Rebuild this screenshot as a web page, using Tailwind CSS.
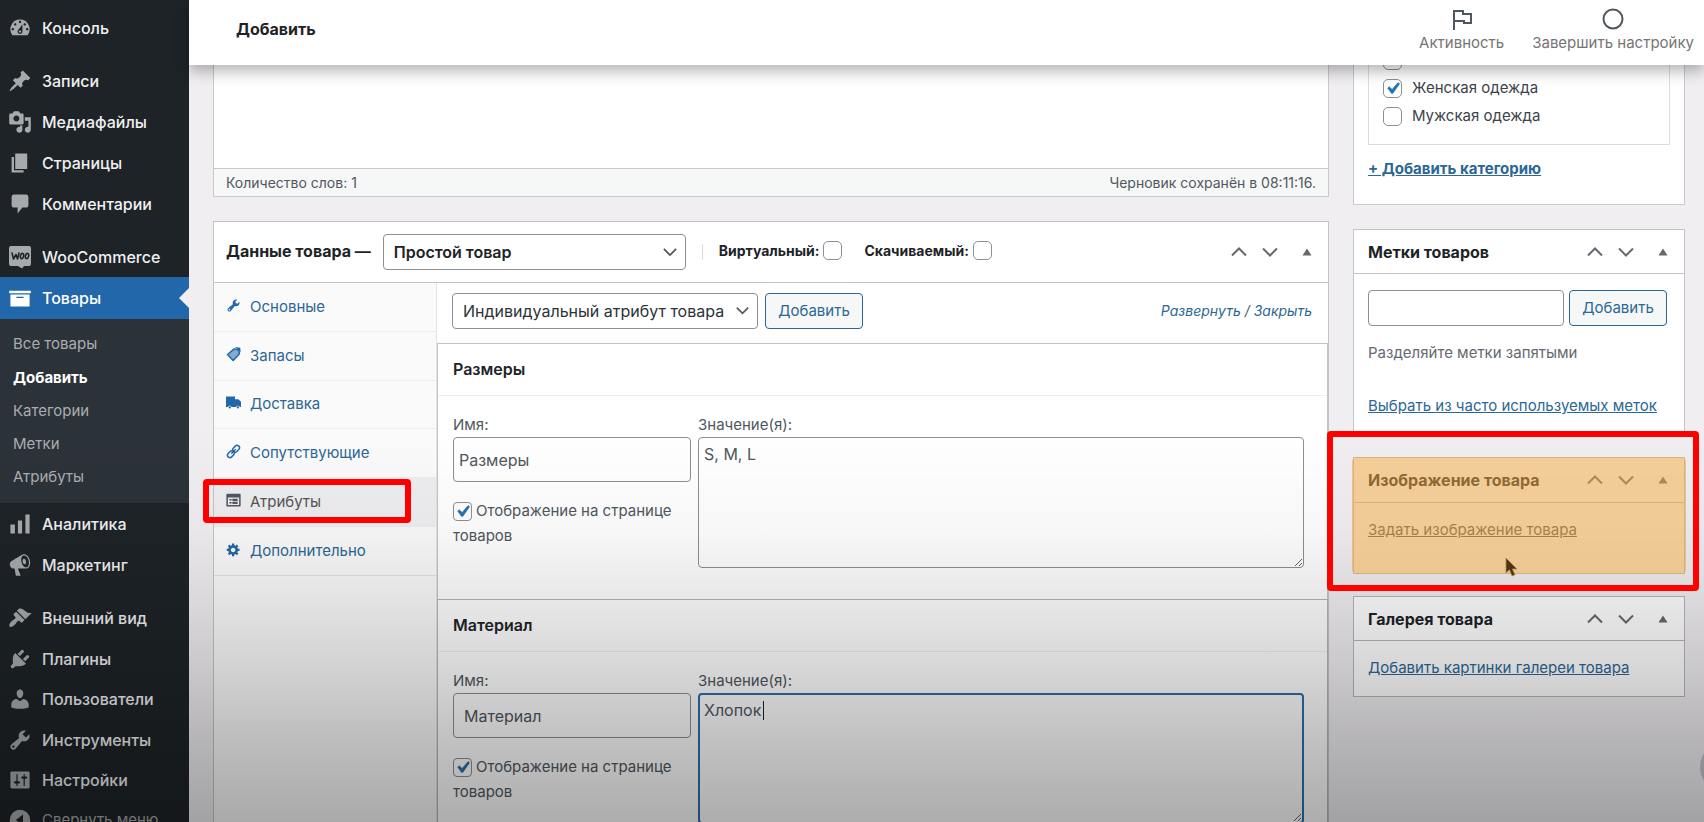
<!DOCTYPE html>
<html lang="ru">
<head>
<meta charset="utf-8">
<meta name="viewport" content="width=device-width, initial-scale=1">
<title>Добавить товар</title>
<script src="https://cdn.jsdelivr.net/npm/@tailwindcss/browser@4"></script>
</head>
<body class="bg-[#f0eef1] font-['Inter','Liberation_Sans',sans-serif] text-[15px] text-[#3c434a]">
<svg class="hidden" aria-hidden="true">
  <symbol id="dash" viewBox="0 0 20 20"><path fill-rule="evenodd" d="M3.76 16h12.48A7.998 7.998 0 0 0 10 3a7.998 7.998 0 0 0-6.24 13zM10 4c.55 0 1 .45 1 1s-.45 1-1 1-1-.45-1-1 .45-1 1-1zM6 6c.55 0 1 .45 1 1s-.45 1-1 1-1-.45-1-1 .45-1 1-1zm8 0c.55 0 1 .45 1 1s-.45 1-1 1-1-.45-1-1 .45-1 1-1zm-5.37 5.55L12 7v6c0 1.1-.9 2-2 2s-2-.9-2-2c0-.57.24-1.08.63-1.45zM4 10c.55 0 1 .45 1 1s-.45 1-1 1-1-.45-1-1 .45-1 1-1zm12 0c.55 0 1 .45 1 1s-.45 1-1 1-1-.45-1-1 .45-1 1-1zm-5 3c0-.55-.45-1-1-1s-1 .45-1 1 .45 1 1 1 1-.45 1-1z"/></symbol>
  <symbol id="pin" viewBox="0 0 20 20"><path d="M10.44 3.02l1.82-1.82 6.36 6.35-1.83 1.82c-1.05-.68-2.48-.57-3.41.36l-.75.75c-.92.93-1.04 2.35-.35 3.41l-1.83 1.82-2.41-2.41-2.8 2.79c-.42.42-3.38 2.71-3.8 2.29s1.86-3.39 2.28-3.81l2.79-2.79L4.1 9.36l1.83-1.82c1.05.69 2.48.57 3.4-.36l.75-.75c.93-.92 1.05-2.35.36-3.41z"/></symbol>
  <symbol id="media" viewBox="0 0 20 20"><path fill-rule="evenodd" d="M13 11V4c0-.55-.45-1-1-1h-1.67L9 1H5L3.67 3H2c-.55 0-1 .45-1 1v7c0 .55.45 1 1 1h10c.55 0 1-.45 1-1zM7 4.5c1.38 0 2.5 1.12 2.5 2.5S8.38 9.5 7 9.5 4.5 8.38 4.5 7 5.62 4.5 7 4.5zM14 6h5v10.5c0 1.38-1.12 2.5-2.5 2.5S14 17.88 14 16.5s1.12-2.5 2.5-2.5c.17 0 .34.02.5.05V9h-3V6zm-4 8.05V13h2v3.5c0 1.38-1.12 2.5-2.5 2.5S7 17.88 7 16.5 8.12 14 9.5 14c.17 0 .34.02.5.05z"/></symbol>
  <symbol id="pages" viewBox="0 0 20 20"><path d="M6 15V2h10v13H6zm-1 1h8v2H3V5h2v11z"/></symbol>
  <symbol id="comment" viewBox="0 0 20 20"><path d="M5 2h10c1.1 0 2 .9 2 2v7c0 1.100-.9 2-2 2h-3l-4 5v-5H5c-1.100 0-2-.9-2-2V4c0-1.100.9-2 2-2z"/></symbol>
  <symbol id="woo" viewBox="0 0 24 24"><path d="M3 1h18a2 2 0 0 1 2 2v16a2 2 0 0 1-2 2h-5l-2 2.500-4-2.500H3a2 2 0 0 1-2-2V3a2 2 0 0 1 2-2z"/><g fill="none" stroke="#1d2327" stroke-width="1.600" stroke-linecap="round" stroke-linejoin="round"><path d="M4 8l1.500 6L8 9.500l1.500 4.500L11 8"/><ellipse cx="14" cy="11" rx="1.600" ry="2.600" transform="rotate(15 14 11)"/><ellipse cx="19" cy="11" rx="1.600" ry="2.600" transform="rotate(15 19 11)"/></g></symbol>
  <symbol id="archive" viewBox="0 0 20 20"><path fill-rule="evenodd" d="M19 4v2H1V4h18zM2 7h16v10H2V7zm11 3V9H7v1h6z"/></symbol>
  <symbol id="bars" viewBox="0 0 20 20"><path d="M18 18V2h-3.500v16h3.500zm-6.250 0V7h-3.500v11h3.500zm-6 0v-7.500H2V18h3.750z"/></symbol>
  <symbol id="mega" viewBox="0 0 20 20"><path fill-rule="evenodd" d="M18.150 5.940c.46 1.620.38 3.220-.02 4.480-.42 1.280-1.260 2.180-2.300 2.480-.16.06-.26.06-.4.06-.06.02-.12.02-.18.02-.06.02-.14.02-.22.02h-6.800l2.220 5.500c.02.14-.06.26-.14.34-.08.1-.24.16-.34.16H6.950c-.1 0-.26-.06-.34-.16-.08-.08-.16-.2-.14-.34l-1-5.500H4.250l-.02-.02c-.5.06-1.080-.18-1.540-.62s-.88-1.080-1.060-1.880c-.24-.8-.2-1.560-.02-2.200.18-.62.58-1.080 1.060-1.300l.02-.02 9-5.400c.1-.06.18-.1.24-.16.06-.04.14-.08.24-.12.16-.08.28-.12.5-.18 1.040-.3 2.240.1 3.220.98s1.840 2.240 2.260 3.860zm-2.580 5.980h-.02c.4-.1.74-.34 1.040-.7.58-.7.86-1.760.86-3.040 0-.64-.1-1.300-.28-1.980-.34-1.360-1.020-2.500-1.780-3.240s-1.680-1.100-2.460-.88c-.82.22-1.400.96-1.700 2-.32 1.040-.28 2.360.06 3.720.38 1.360 1 2.500 1.800 3.240.78.74 1.620 1.100 2.480.88zm-2.540-7.080c.22-.04.42-.02.62.04.38.16.76.48 1.020 1s.42 1.200.42 1.780c0 .3-.04.56-.12.8-.18.48-.44.84-.86.94-.34.1-.8-.06-1.140-.4s-.64-.86-.78-1.500c-.18-.62-.12-1.240.02-1.720s.48-.84.82-.94z"/></symbol>
  <symbol id="brush" viewBox="0 0 20 20"><path d="M14.480 11.060L7.410 3.990l1.500-1.500c.5-.56 2.300-.47 3.510.32 1.210.8 1.430 1.280 2.910 2.100 1.180.64 2.450 1.260 4.450.85zm-.71.71L6.700 4.700 4.930 6.470c-.39.39-.39 1.020 0 1.410l1.060 1.060c.39.39.39 1.030 0 1.420-.6.6-1.430 1.110-2.210 1.690-.35.26-.7.53-1.010.84C1.430 14.230.4 16.080 1.400 17.070c.99 1 2.840-.03 4.180-1.360.31-.31.58-.66.85-1.020.57-.78 1.080-1.610 1.690-2.210.39-.39 1.020-.39 1.410 0l1.060 1.060c.39.39 1.020.39 1.410 0z"/></symbol>
  <symbol id="plug" viewBox="0 0 20 20"><path d="M13.110 4.360L9.870 7.600 8 5.730l3.240-3.240c.35-.34 1.050-.2 1.560.32.52.51.66 1.210.31 1.550zm-8 1.770l.91-1.120 9.010 9.010-1.190.84c-.71.71-2.630 1.160-3.820 1.160H6.140L4.900 17.260c-.59.59-1.540.59-2.120 0-.59-.58-.59-1.530 0-2.120l1.240-1.240v-3.880c0-1.130.4-3.190 1.090-3.890zm7.260 3.970l3.240-3.240c.34-.35 1.040-.21 1.550.31.52.51.66 1.210.31 1.550l-3.240 3.250z"/></symbol>
  <symbol id="user" viewBox="0 0 20 20"><path d="M10 9.250c-2.270 0-2.730-3.440-2.730-3.440C7 4.020 7.820 2 9.970 2c2.160 0 2.980 2.020 2.710 3.810 0 0-.41 3.440-2.680 3.440zm0 2.570L12.720 10c2.390 0 4.520 2.330 4.520 4.530v2.490s-3.650 1.130-7.240 1.130c-3.650 0-7.240-1.130-7.240-1.130v-2.490c0-2.250 1.940-4.480 4.470-4.480z"/></symbol>
  <symbol id="wrench" viewBox="0 0 20 20"><path fill-rule="evenodd" d="M16.680 9.770c-1.340 1.340-3.300 1.670-4.950.99l-5.410 6.520c-.99.99-2.590.99-3.580 0s-.99-2.590 0-3.570l6.520-5.420c-.68-1.650-.35-3.610.99-4.950 1.280-1.280 3.120-1.620 4.720-1.060l-2.890 2.890 2.820 2.820 2.860-2.870c.53 1.580.18 3.390-1.080 4.650zM3.810 16.210c.4.39 1.040.39 1.430 0 .4-.4.4-1.040 0-1.430-.39-.4-1.030-.4-1.430 0-.39.39-.39 1.030 0 1.430z"/></symbol>
  <symbol id="sliders" viewBox="0 0 20 20"><path fill-rule="evenodd" d="M18 16V4c0-.55-.45-1-1-1H3c-.55 0-1 .45-1 1v12c0 .55.45 1 1 1h14c.55 0 1-.45 1-1zM8 11h1c.55 0 1 .45 1 1s-.45 1-1 1H8v1.500c0 .28-.22.5-.5.5s-.5-.22-.5-.5V13H6c-.55 0-1-.45-1-1s.45-1 1-1h1V5.500c0-.28.22-.5.5-.5s.5.22.5.5V11zm5-2h-1c-.55 0-1-.45-1-1s.45-1 1-1h1V5.500c0-.28.22-.5.5-.5s.5.22.5.5V7h1c.55 0 1 .45 1 1s-.45 1-1 1h-1v5.500c0 .28-.22.5-.5.5s-.5-.22-.5-.5V9z"/></symbol>
  <symbol id="collapse" viewBox="0 0 20 20"><path fill-rule="evenodd" d="M10 1.500a8.500 8.500 0 1 1 0 17 8.500 8.500 0 0 1 0-17zM12.500 5.500L6.500 10l6 4.500z"/></symbol>
  <symbol id="tag" viewBox="0 0 20 20"><path fill="none" stroke="#2267a9" stroke-width="2" stroke-linejoin="round" d="M11 2.500L2 10l7.500 8 8.500-9-1-5z"/><path opacity=".55" d="M11 2.500L2 10l7.500 8 8.500-9-1-5z"/><path d="M12 0l7 1 .5 6-3-3z"/></symbol>
  <symbol id="truck" viewBox="0 0 20 20"><path d="M0 2h12v3.500h4.500L20 9v7h-1.700a2.600 2.600 0 0 0-4.900 0H7.400a2.600 2.600 0 0 0-4.900 0H0z"/><circle cx="5" cy="16.600" r="1.500"/><circle cx="15.800" cy="16.600" r="1.500"/></symbol>
  <symbol id="chain" viewBox="0 0 20 20"><g fill="none" stroke="currentColor" stroke-width="2"><rect x="8.500" y="3.200" width="10" height="6.400" rx="3.200" transform="rotate(-45 13.500 6.400)"/><rect x="1.500" y="10.400" width="10" height="6.400" rx="3.200" transform="rotate(-45 6.500 13.600)"/><path d="M7 13l6-6"/></g></symbol>
  <symbol id="form" viewBox="0 0 20 20"><path fill-rule="evenodd" d="M1.500 1h17a1 1 0 0 1 1 1v15a1 1 0 0 1-1 1h-17a1 1 0 0 1-1-1V2a1 1 0 0 1 1-1zm1 5v10h15V6zm2 2h3v2h-3zm4 -.5h7v3h-7zm-4 4.500h3v2h-3zm4 -.5h7v3h-7z"/></symbol>
  <symbol id="gear" viewBox="0 0 20 20"><path fill-rule="evenodd" d="M18 12h-2.180c-.17.7-.44 1.350-.81 1.930l1.540 1.540-2.100 2.100-1.540-1.540c-.58.36-1.230.63-1.910.79V19H8v-2.180c-.68-.16-1.330-.43-1.910-.79l-1.540 1.540-2.120-2.120 1.540-1.540c-.36-.58-.63-1.230-.79-1.910H1V9.030h2.170c.16-.7.44-1.350.8-1.940L2.430 5.550l2.100-2.100 1.540 1.540c.58-.37 1.240-.64 1.930-.81V2h3v2.180c.68.16 1.330.43 1.910.79l1.540-1.540 2.120 2.120-1.540 1.540c.36.59.64 1.240.8 1.940H18V12zm-8.500 1.500c1.660 0 3-1.340 3-3s-1.340-3-3-3-3 1.340-3 3 1.340 3 3 3z"/></symbol>
  <symbol id="up" viewBox="0 0 16 16"><path d="M1 11.500l7-7 7 7" fill="none" stroke="currentColor" stroke-width="2"/></symbol>
  <symbol id="down" viewBox="0 0 16 16"><path d="M1 4.500l7 7 7-7" fill="none" stroke="currentColor" stroke-width="2"/></symbol>
  <symbol id="tri" viewBox="0 0 10 8"><path d="M5 0.500L9.500 7.500h-9z"/></symbol>
  <symbol id="check" viewBox="0 0 20 20"><path d="M14.830 4.890l1.340.94-5.810 8.380H9.020L5.780 9.670l1.340-1.250 2.570 2.400z" fill="#2271b1" stroke="#2271b1" stroke-width=".5"/></symbol>
</svg>

<div class="relative flex h-screen overflow-hidden">
  <aside class="w-[189px] shrink-0 bg-[#1d2327] pt-[7px]">
    <nav aria-label="Главное меню" class="text-[16px] font-medium whitespace-nowrap text-[#f0f0f1]">
      <a href="#" class="mb-3 flex h-[41px] items-center gap-[10px] pl-2"><svg class="size-6 shrink-0 fill-[#a7aaad]"><use href="#dash"/></svg>Консоль</a>
      <a href="#" class="flex h-[41px] items-center gap-[10px] pl-2"><svg class="size-6 shrink-0 fill-[#a7aaad]"><use href="#pin"/></svg>Записи</a>
      <a href="#" class="flex h-[41px] items-center gap-[10px] pl-2"><svg class="size-6 shrink-0 fill-[#a7aaad]"><use href="#media"/></svg>Медиафайлы</a>
      <a href="#" class="flex h-[41px] items-center gap-[10px] pl-2"><svg class="size-6 shrink-0 fill-[#a7aaad]"><use href="#pages"/></svg>Страницы</a>
      <a href="#" class="mb-3 flex h-[41px] items-center gap-[10px] pl-2"><svg class="size-6 shrink-0 fill-[#a7aaad]"><use href="#comment"/></svg>Комментарии</a>
      <a href="#" class="flex h-[41px] items-center gap-[10px] pl-2"><svg class="size-6 shrink-0 fill-[#a7aaad]"><use href="#woo"/></svg>WooCommerce</a>
      <a href="#" aria-current="page" class="relative flex h-[42px] items-center gap-[10px] bg-[#2267a9] pl-2 text-white"><svg class="size-6 shrink-0 fill-white"><use href="#archive"/></svg>Товары<span class="absolute top-[11px] right-0 border-y-[10px] border-r-[10px] border-y-transparent border-r-[#f0eef1]"></span></a>
      <div class="bg-[#2c3338] py-[9px] text-[15px] font-normal text-[#a9adb2]">
        <a href="#" class="flex h-[33px] items-center pl-[13px]">Все товары</a>
        <a href="#" class="flex h-[34px] items-center pl-[13px] font-bold text-white">Добавить</a>
        <a href="#" class="flex h-[33px] items-center pl-[13px]">Категории</a>
        <a href="#" class="flex h-[33px] items-center pl-[13px]">Метки</a>
        <a href="#" class="flex h-[33px] items-center pl-[13px]">Атрибуты</a>
      </div>
      <a href="#" class="flex h-[41px] items-center gap-[10px] pl-2"><svg class="size-6 shrink-0 fill-[#a7aaad]"><use href="#bars"/></svg>Аналитика</a>
      <a href="#" class="mb-3 flex h-[41px] items-center gap-[10px] pl-2"><svg class="size-6 shrink-0 fill-[#a7aaad]"><use href="#mega"/></svg>Маркетинг</a>
      <a href="#" class="flex h-[41px] items-center gap-[10px] pl-2"><svg class="size-6 shrink-0 fill-[#a7aaad]"><use href="#brush"/></svg>Внешний вид</a>
      <a href="#" class="flex h-[41px] items-center gap-[10px] pl-2"><svg class="size-6 shrink-0 fill-[#a7aaad]"><use href="#plug"/></svg>Плагины</a>
      <a href="#" class="flex h-[40px] items-center gap-[10px] pl-2"><svg class="size-6 shrink-0 fill-[#a7aaad]"><use href="#user"/></svg>Пользователи</a>
      <a href="#" class="flex h-[41px] items-center gap-[10px] pl-2"><svg class="size-6 shrink-0 fill-[#a7aaad]"><use href="#wrench"/></svg>Инструменты</a>
      <a href="#" class="flex h-[40px] items-center gap-[10px] pl-2"><svg class="size-6 shrink-0 fill-[#a7aaad]"><use href="#sliders"/></svg>Настройки</a>
      <button type="button" class="flex h-[40px] items-center gap-[10px] pl-2 text-[15px] font-normal text-[#a7aaad]"><svg class="size-6 shrink-0 fill-[#a7aaad]"><use href="#collapse"/></svg>Свернуть меню</button>
    </nav>
  </aside>

  <div class="relative min-w-0 flex-1">
    <header class="absolute inset-x-0 top-0 z-10 flex h-[65px] items-center justify-between bg-white pr-[10px] pb-1 pl-[47px] shadow-[0_6px_14px_rgba(0,0,0,0.3)]">
      <h1 class="pb-1 text-[16px] font-bold text-[#1d2327]">Добавить</h1>
      <div class="flex gap-7 text-[15px] text-[#757575]">
        <button type="button" class="flex flex-col items-center"><svg viewBox="0 0 24 24" class="size-6 fill-none stroke-[#50575e] stroke-2"><path d="M4 23V4h9v3h8v9h-7v-2H4"/></svg><span class="leading-6">Активность</span></button>
        <button type="button" class="flex flex-col items-center"><svg viewBox="0 0 24 24" class="size-6 fill-none stroke-[#50575e] stroke-2"><circle cx="12" cy="12" r="9.500"/></svg><span class="leading-6">Завершить настройку</span></button>
      </div>
    </header>

    <main class="flex h-full items-start gap-6 pr-[19px] pl-6">
      <div class="min-w-0 flex-1">
        <section class="mb-6 border border-[#c9cacc] bg-white pt-[167px]">
          <div class="flex h-7 items-center justify-between border-t border-[#c9cacc] bg-[#f6f7f7] px-3 text-[14px] text-[#50575e]">
            <span>Количество слов: 1</span><span>Черновик сохранён в 08:11:16.</span>
          </div>
        </section>

        <section class="border border-[#c3c4c7] bg-white">
          <div class="flex h-[61px] items-center border-b border-[#c3c4c7] px-3 font-bold whitespace-nowrap text-[#1d2327]">
            <label for="ptype" class="mr-3 pb-[2px] text-[16px]">Данные товара —</label>
            <span class="relative w-[303px]">
              <select id="ptype" class="block h-9 w-full appearance-none rounded border border-[#8c8f94] bg-white pl-[10px] text-[16px] font-semibold"><option>Простой товар</option></select>
              <svg class="pointer-events-none absolute top-[11px] right-[9px] size-[14px] text-[#50575e]"><use href="#down"/></svg>
            </span>
            <span class="mx-4 h-4 w-px bg-[#dcdcde]"></span>
            <label class="mr-[22px] flex items-center gap-1 pb-1 text-[14px]">Виртуальный:<input type="checkbox" class="size-[19px] appearance-none rounded-[5px] border border-[#8c8f94] bg-white"></label>
            <label class="flex items-center gap-1 pb-1 text-[14px]">Скачиваемый:<input type="checkbox" class="size-[19px] appearance-none rounded-[5px] border border-[#8c8f94] bg-white"></label>
            <span class="ml-auto flex items-center text-[#646970]">
              <button type="button" aria-label="Выше" class="mr-[15px]"><svg class="size-4"><use href="#up"/></svg></button>
              <button type="button" aria-label="Ниже" class="mr-6"><svg class="size-4"><use href="#down"/></svg></button>
              <button type="button" aria-label="Свернуть" class="mr-1"><svg class="h-2 w-[10px] fill-current"><use href="#tri"/></svg></button>
            </span>
          </div>

          <div class="flex">
            <nav aria-label="Данные товара" class="h-[700px] w-[223px] shrink-0 border-r border-[#e4e4e6] bg-[#fafafa] text-[15px] text-[#2c6796]">
              <a href="#" class="flex h-[49px] items-center gap-[9px] border-b border-[#ececee] pl-3"><svg class="mb-1 size-[15px] shrink-0 fill-[#2267a9]"><use href="#wrench"/></svg>Основные</a>
              <a href="#" class="flex h-[49px] items-center gap-[9px] border-b border-[#ececee] pl-3"><svg class="mb-1 size-[15px] shrink-0 fill-[#2267a9]"><use href="#tag"/></svg>Запасы</a>
              <a href="#" class="flex h-[48px] items-center gap-[9px] border-b border-[#ececee] pl-3"><svg class="mb-1 size-[15px] shrink-0 fill-[#2267a9]"><use href="#truck"/></svg>Доставка</a>
              <a href="#" class="flex h-[49px] items-center gap-[9px] border-b border-[#ececee] pl-3"><svg class="mb-1 size-[15px] shrink-0 text-[#2267a9]"><use href="#chain"/></svg>Сопутствующие</a>
              <a href="#" aria-current="true" class="flex h-[49px] items-center gap-[9px] border-b border-[#ececee] bg-[#eeedef] pl-3 text-[#555]"><svg class="mb-1 size-[15px] shrink-0 fill-[#50575e]"><use href="#form"/></svg>Атрибуты</a>
              <a href="#" class="flex h-[49px] items-center gap-[9px] border-b border-[#e2e2e4] pl-3"><svg class="mb-1 size-[15px] shrink-0 fill-[#2267a9]"><use href="#gear"/></svg>Дополнительно</a>
            </nav>

            <div class="min-w-0 flex-1">
              <div class="flex h-[60px] items-center pr-4 pb-1 pl-[15px]">
                <span class="relative w-[306px]">
                  <select aria-label="Атрибут" class="block h-9 w-full appearance-none rounded border border-[#8c8f94] bg-white pl-[10px] text-[16px] text-[#2c3338]"><option>Индивидуальный атрибут товара</option></select>
                  <svg class="pointer-events-none absolute top-[11px] right-[9px] size-[13px] text-[#50575e]"><use href="#down"/></svg>
                </span>
                <button type="button" class="ml-[7px] h-9 w-[98px] rounded border border-[#2c6796] bg-[#f6f7f7] text-[15px] text-[#2c6796]">Добавить</button>
                <span class="ml-auto pb-[2px] text-[14px] text-[#50575e] italic"><a href="#" class="text-[#2c6796]">Развернуть</a> / <a href="#" class="text-[#2c6796]">Закрыть</a></span>
              </div>

              <section class="border-x border-t border-[#c3c4c7]">
                <h3 class="flex h-[52px] items-center border-b border-[#eeeeef] px-[15px] pb-[2px] text-[16px] font-semibold text-[#1d2327]">Размеры</h3>
                <div class="flex h-[203px] gap-[7px] pt-[17px] pr-[23px] pl-[15px] text-[15px] text-[#50575e]">
                  <div class="w-[238px] shrink-0">
                    <label for="n1" class="block h-6 leading-6">Имя:</label>
                    <input id="n1" value="Размеры" class="block h-[45px] w-full rounded border border-[#8c8f94] bg-white px-[5px] text-[16px] text-[#50575e]">
                    <label class="mt-4 block leading-[25px]"><span class="relative mr-1 inline-block size-[19px] align-middle"><input type="checkbox" checked class="block size-[19px] appearance-none rounded-[4px] border border-[#8c8f94] bg-white"><svg class="pointer-events-none absolute inset-[-2px] size-[23px]"><use href="#check"/></svg></span>Отображение на странице товаров</label>
                  </div>
                  <div class="min-w-0 flex-1">
                    <label for="v1" class="block h-6 leading-6">Значение(я):</label>
                    <textarea id="v1" class="block h-[131px] w-full resize rounded border border-[#8c8f94] bg-white px-[5px] py-1 text-[16px] leading-6 text-[#50575e]">S, M, L</textarea>
                  </div>
                </div>
              </section>

              <section class="border-x border-t border-[#b5b6b9]">
                <h3 class="flex h-[52px] items-center border-b border-[#eeeeef] px-[15px] pb-[2px] text-[16px] font-semibold text-[#1d2327]">Материал</h3>
                <div class="flex h-[330px] gap-[7px] pt-[17px] pr-[23px] pl-[15px] text-[15px] text-[#50575e]">
                  <div class="w-[238px] shrink-0">
                    <label for="n2" class="block h-6 leading-6">Имя:</label>
                    <input id="n2" value="Материал" class="block h-[45px] w-full rounded border border-[#8c8f94] bg-white px-[10px] text-[16px] text-[#50575e]">
                    <label class="mt-4 block leading-[25px]"><span class="relative mr-1 inline-block size-[19px] align-middle"><input type="checkbox" checked class="block size-[19px] appearance-none rounded-[4px] border border-[#8c8f94] bg-white"><svg class="pointer-events-none absolute inset-[-2px] size-[23px]"><use href="#check"/></svg></span>Отображение на странице товаров</label>
                  </div>
                  <div class="relative min-w-0 flex-1">
                    <label for="v2" class="block h-6 leading-6">Значение(я):</label>
                    <textarea id="v2" class="block h-[131px] w-full resize rounded border-2 border-[#2c6fae] bg-white px-1 py-[3px] text-[16px] leading-6 text-[#50575e]">Хлопок</textarea>
                    <span class="absolute top-8 left-[65px] h-[19px] w-px bg-[#1d2327]"></span>
                  </div>
                </div>
              </section>
            </div>
          </div>
        </section>
      </div>

      <div class="w-[332px] shrink-0">
        <section class="mb-6 h-[205px] border border-[#c9cacc] bg-white px-[14px]">
          <div class="mb-[13px] flex h-[144px] flex-col justify-end gap-[3px] border border-t-0 border-[#dcdcde] pb-[15px] pl-[14px] text-[15px]">
            <label class="flex h-[25px] items-center gap-[10px]"><input type="checkbox" class="size-[19px] appearance-none rounded-[5px] border border-[#8c8f94] bg-white">Misc</label>
            <label class="flex h-[25px] items-center gap-[10px]"><span class="relative"><input type="checkbox" checked class="block size-[19px] appearance-none rounded-[5px] border border-[#8c8f94] bg-white"><svg class="pointer-events-none absolute inset-[-2px] size-[23px]"><use href="#check"/></svg></span>Женская одежда</label>
            <label class="flex h-[25px] items-center gap-[10px]"><input type="checkbox" class="size-[19px] appearance-none rounded-[5px] border border-[#8c8f94] bg-white">Мужская одежда</label>
          </div>
          <a href="#" class="text-[15px] font-bold text-[#2c6796] underline">+ Добавить категорию</a>
        </section>

        <section class="mb-[22px] h-[206px] border border-[#c3c4c7] bg-white">
          <div class="flex h-[44px] items-center justify-between border-b border-[#c3c4c7] pr-4 pl-[14px]">
            <h2 class="text-[16px] font-bold text-[#1d2327]">Метки товаров</h2>
            <span class="flex items-center text-[#646970]">
              <button type="button" aria-label="Выше" class="mr-[15px]"><svg class="size-4"><use href="#up"/></svg></button>
              <button type="button" aria-label="Ниже" class="mr-6"><svg class="size-4"><use href="#down"/></svg></button>
              <button type="button" aria-label="Свернуть"><svg class="h-2 w-[10px] fill-current"><use href="#tri"/></svg></button>
            </span>
          </div>
          <div class="px-[14px] pt-4">
            <div class="flex gap-[5px]"><input aria-label="Новая метка" class="h-9 w-[196px] rounded border border-[#8c8f94] bg-white"><button type="button" class="h-9 w-[98px] rounded border border-[#2c6796] bg-[#f6f7f7] text-[15px] text-[#2c6796]">Добавить</button></div>
            <p class="mt-[15px] mb-[29px] leading-6 text-[#646970]">Разделяйте метки запятыми</p>
            <a href="#" class="block leading-6 whitespace-nowrap text-[#2c6796] underline">Выбрать из часто используемых меток</a>
          </div>
        </section>

        <section class="mb-[22px] h-[117px] border border-[#c3c4c7] bg-white">
          <div class="flex h-[45px] items-center justify-between border-b border-[#c3c4c7] pr-4 pl-[14px]">
            <h2 class="text-[16px] font-bold text-[#1d2327]">Изображение товара</h2>
            <span class="flex items-center text-[#646970]">
              <button type="button" aria-label="Выше" class="mr-[15px]"><svg class="size-4"><use href="#up"/></svg></button>
              <button type="button" aria-label="Ниже" class="mr-6"><svg class="size-4"><use href="#down"/></svg></button>
              <button type="button" aria-label="Свернуть"><svg class="h-2 w-[10px] fill-current"><use href="#tri"/></svg></button>
            </span>
          </div>
          <a href="#" class="block px-[14px] pt-[15px] leading-6 text-[#50575e] underline">Задать изображение товара</a>
        </section>

        <section class="h-[101px] border border-[#b5b6b9] bg-white">
          <div class="flex h-[44px] items-center justify-between border-b border-[#b5b6b9] pr-4 pl-[14px]">
            <h2 class="text-[16px] font-bold text-[#1d2327]">Галерея товара</h2>
            <span class="flex items-center text-[#646970]">
              <button type="button" aria-label="Выше" class="mr-[15px]"><svg class="size-4"><use href="#up"/></svg></button>
              <button type="button" aria-label="Ниже" class="mr-6"><svg class="size-4"><use href="#down"/></svg></button>
              <button type="button" aria-label="Свернуть"><svg class="h-2 w-[10px] fill-current"><use href="#tri"/></svg></button>
            </span>
          </div>
          <a href="#" class="block px-[14px] pt-[15px] leading-6 text-[#2c6796] underline">Добавить картинки галереи товара</a>
        </section>
      </div>
    </main>
  </div>

  <!-- Round help button, mostly past the right edge -->
  <span class="pointer-events-none absolute top-[742px] -right-[46px] size-[50px] rounded-full bg-[#c4c3cc]"></span>

  <!-- Shade towards the bottom of the window -->
  <div class="pointer-events-none absolute inset-x-0 top-[430px] bottom-0 z-20 bg-[linear-gradient(to_bottom,transparent_0%,rgba(0,0,0,0.03)_26%,rgba(0,0,0,0.09)_43%,rgba(0,0,0,0.16)_61%,rgba(0,0,0,0.24)_78%,rgba(0,0,0,0.32)_100%)]"></div>

  <!-- Marks over the page: highlight, frames and pointer -->
  <div class="pointer-events-none absolute top-[457px] right-[18px] z-20 h-[117px] w-[334px] rounded-[5px] bg-[rgba(232,165,64,0.54)]"></div>
  <svg viewBox="0 0 14 22" class="pointer-events-none absolute top-[557px] left-[1505px] z-20 h-[22px] w-[14px]"><path d="M1 1v15l3.500-3.200L7 19l3-1.200-2.600-5.800H12z" fill="#4a3413" stroke="#b98a45" stroke-width=".8"/></svg>
  <div class="pointer-events-none absolute top-[431px] right-[5px] z-20 h-[160px] w-[372px] rounded-[4px] border-6 border-[#ff0000]"></div>
  <div class="pointer-events-none absolute top-[479px] left-[203px] z-20 h-[44px] w-[208px] rounded-[4px] border-6 border-[#ff0000]"></div>
</div>
</body>
</html>
